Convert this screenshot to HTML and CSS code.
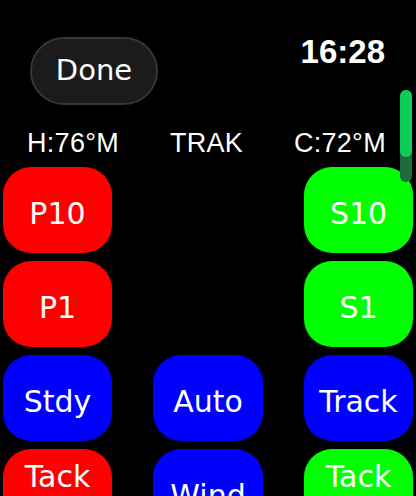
FILE: index.html
```html
<!DOCTYPE html>
<html lang="en">
<head>
<meta charset="UTF-8" />
<meta name="viewport" content="width=device-width, initial-scale=1" />
<title>Autopilot</title>
<link rel="stylesheet" href="styles.css">
</head>
<body>
  <div class="screen">
    <div class="top">
      <button class="doneBtn">Done</button>
      <div class="time">16:28</div>
    </div>

    <div class="labels">
      <span>H:76°M</span>
      <span>TRAK</span>
      <span>C:72°M</span>
    </div>

    <div class="pad">
      <button class="key red">P10</button>
      <span class="empty"></span>
      <button class="key green">S10</button>

      <button class="key red">P1</button>
      <span class="empty"></span>
      <button class="key green">S1</button>

      <button class="key blue">Stdy</button>
      <button class="key blue">Auto</button>
      <button class="key blue">Track</button>

      <button class="key red two">Tack<br>Port</button>
      <button class="key blue">Wind</button>
      <button class="key green two">Tack<br>Stbd</button>
    </div>

    <div class="scroller"><div class="thumb"></div></div>
  </div>
</body>
</html>
```

FILE: styles.css
```css
body {
  margin: 0;
  background: #000;
  color: #fff;
  font-family: "DejaVu Sans", sans-serif;
}
.screen {
  position: relative;
  width: 416px;
  height: 496px;
  overflow: hidden;
}
.top {
  display: flex;
  justify-content: space-between;
  align-items: flex-start;
  padding: 37px 31px 0 30px;
}
.doneBtn {
  width: 128px;
  height: 68px;
  border-radius: 34px;
  background: #1b1b1b;
  border: 2px solid #363636;
  color: #fff;
  font-family: "DejaVu Sans", sans-serif;
  font-size: 29px;
  padding: 0 0 2px 0;
}
.time {
  font-family: "Liberation Sans", sans-serif;
  font-weight: 700;
  font-size: 33px;
  line-height: 38px;
  margin-top: -4px;
}
.labels {
  display: flex;
  justify-content: space-between;
  padding: 0 30px 0 27px;
  margin-top: 22px;
  font-family: "Liberation Sans", sans-serif;
  font-size: 27px;
  line-height: 32px;
  letter-spacing: 0.3px;
}
.pad {
  display: grid;
  grid-template-columns: 109px 110px 109px;
  grid-auto-rows: 86px;
  column-gap: 41px;
  row-gap: 8px;
  padding-left: 3px;
  margin-top: 8px;
}
.key {
  border: none;
  border-radius: 28px;
  color: #fff;
  font-family: "DejaVu Sans", sans-serif;
  font-size: 30px;
  line-height: 36px;
  padding: 8px 0 0 0;
}
.key.two {
  padding-top: 6px;
}
.red { background: #ff0000; }
.green { background: #00ff00; }
.blue { background: #0000ff; }
.scroller {
  position: absolute;
  left: 400px;
  top: 90px;
  width: 12px;
  height: 92px;
  border-radius: 6px;
  background: #1f6a3e;
}
.thumb {
  height: 67px;
  border-radius: 6px;
  background: #0dcc5a;
}
```
